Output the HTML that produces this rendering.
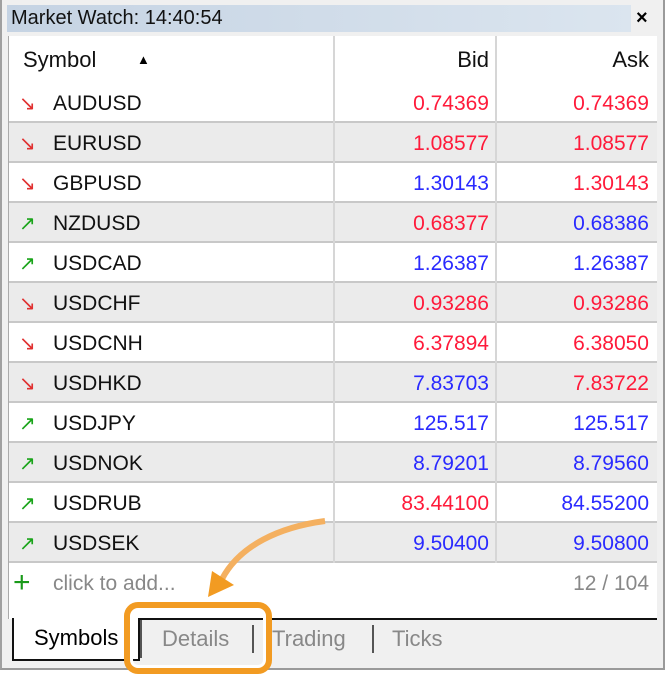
<!DOCTYPE html>
<html><head><style>
*{margin:0;padding:0;box-sizing:border-box}
body{width:666px;height:680px;background:#fff;position:relative;font-family:"Liberation Sans",sans-serif;overflow:hidden}
.abs{position:absolute}
#panel{left:0;top:0;width:665px;height:670px;background:#f0f0f0;border:2px solid #9a9a9a;border-top:none;border-left:2px solid #a0a0a0}
#title{left:7px;top:5px;width:624px;height:27px;background:linear-gradient(90deg,#c5d3e3,#dbe5ef);font-size:20px;color:#111;line-height:27px;padding-left:4px}
#close{left:636px;top:5px;font-size:20px;font-weight:bold;line-height:27px}
#list{left:8px;top:36px;width:649px;height:583px;background:#fff;border-left:1px solid #aaa}
.row{position:absolute;left:0;width:648px;height:40px;border-bottom:2px solid #c8c8c8;font-size:21px;line-height:42px}
.row.g{background:#ebebeb}
.sym{position:absolute;left:44px;color:#111}
.ar{position:absolute;left:10px;top:0;font-size:20px}
.bid{position:absolute;right:168px;}
.ask{position:absolute;right:8px;}
.sep{position:absolute;top:0;width:2px;height:527px;background:#d6d6d6}
.r{color:#ff1a3a}.b{color:#2a2aff}
.up{color:#1aa41a}.dn{color:#e03030}
</style></head><body>
<div id="panel" class="abs"></div>
<div id="title" class="abs">Market Watch: 14:40:54</div>
<div id="close" class="abs">×</div>
<div id="list" class="abs">
<div class="row" style="top:0;height:45px;line-height:48px;border-bottom:none;font-size:22px"><span class="sym" style="left:14px">Symbol</span><span class="abs" style="left:128px;top:0;font-size:13px">▲</span><span class="bid" style="color:#111">Bid</span><span class="ask" style="color:#111">Ask</span></div>
<div class="row" style="top:47px"><span class="ar dn">↘</span><span class="sym">AUDUSD</span><span class="bid r">0.74369</span><span class="ask r">0.74369</span></div>
<div class="row g" style="top:87px"><span class="ar dn">↘</span><span class="sym">EURUSD</span><span class="bid r">1.08577</span><span class="ask r">1.08577</span></div>
<div class="row" style="top:127px"><span class="ar dn">↘</span><span class="sym">GBPUSD</span><span class="bid b">1.30143</span><span class="ask r">1.30143</span></div>
<div class="row g" style="top:167px"><span class="ar up">↗</span><span class="sym">NZDUSD</span><span class="bid r">0.68377</span><span class="ask b">0.68386</span></div>
<div class="row" style="top:207px"><span class="ar up">↗</span><span class="sym">USDCAD</span><span class="bid b">1.26387</span><span class="ask b">1.26387</span></div>
<div class="row g" style="top:247px"><span class="ar dn">↘</span><span class="sym">USDCHF</span><span class="bid r">0.93286</span><span class="ask r">0.93286</span></div>
<div class="row" style="top:287px"><span class="ar dn">↘</span><span class="sym">USDCNH</span><span class="bid r">6.37894</span><span class="ask r">6.38050</span></div>
<div class="row g" style="top:327px"><span class="ar dn">↘</span><span class="sym">USDHKD</span><span class="bid b">7.83703</span><span class="ask r">7.83722</span></div>
<div class="row" style="top:367px"><span class="ar up">↗</span><span class="sym">USDJPY</span><span class="bid b">125.517</span><span class="ask b">125.517</span></div>
<div class="row g" style="top:407px"><span class="ar up">↗</span><span class="sym">USDNOK</span><span class="bid b">8.79201</span><span class="ask b">8.79560</span></div>
<div class="row" style="top:447px"><span class="ar up">↗</span><span class="sym">USDRUB</span><span class="bid r">83.44100</span><span class="ask b">84.55200</span></div>
<div class="row g" style="top:487px"><span class="ar up">↗</span><span class="sym">USDSEK</span><span class="bid b">9.50400</span><span class="ask b">9.50800</span></div>
<div class="sep" style="left:324px"></div><div class="sep" style="left:486px"></div>
<div class="row" style="top:527px;border:none"><span class="abs" style="left:4px;color:#1a9a1a;font-size:30px;line-height:40px">+</span><span class="sym" style="color:#888">click to add...</span><span class="ask" style="color:#888">12 / 104</span></div>
</div>
<div class="abs" style="left:14px;top:618px;width:643px;height:2px;background:#111"></div>
<div class="abs" style="left:12px;top:618px;width:128px;height:43px;border:2px solid #111;border-top:none;background:#fff;font-size:22px;line-height:40px;padding-left:20px">Symbols</div>
<div class="abs" style="left:140px;top:620px;width:2px;height:38px;background:#555"></div>
<div class="abs" style="left:162px;top:620px;font-size:22px;line-height:38px;color:#888">Details</div>
<div class="abs" style="left:252px;top:625px;width:2px;height:28px;background:#555"></div>
<div class="abs" style="left:272px;top:620px;font-size:22px;line-height:38px;color:#888">Trading</div>
<div class="abs" style="left:372px;top:625px;width:2px;height:28px;background:#555"></div>
<div class="abs" style="left:392px;top:620px;font-size:22px;line-height:38px;color:#888">Ticks</div>
<div class="abs" style="left:124px;top:602px;width:148px;height:72px;border:6px solid #f29b22;border-radius:14px;box-shadow:inset 0 0 0 3px #fff"></div>
<svg class="abs" style="left:200px;top:515px" width="130" height="90"><path d="M125 6 C80 12 40 30 22 64" stroke="#f4b060" stroke-width="6" fill="none"/><path d="M8 82 L12 56 L34 70 Z" fill="#f29b22"/></svg>
</body></html>
